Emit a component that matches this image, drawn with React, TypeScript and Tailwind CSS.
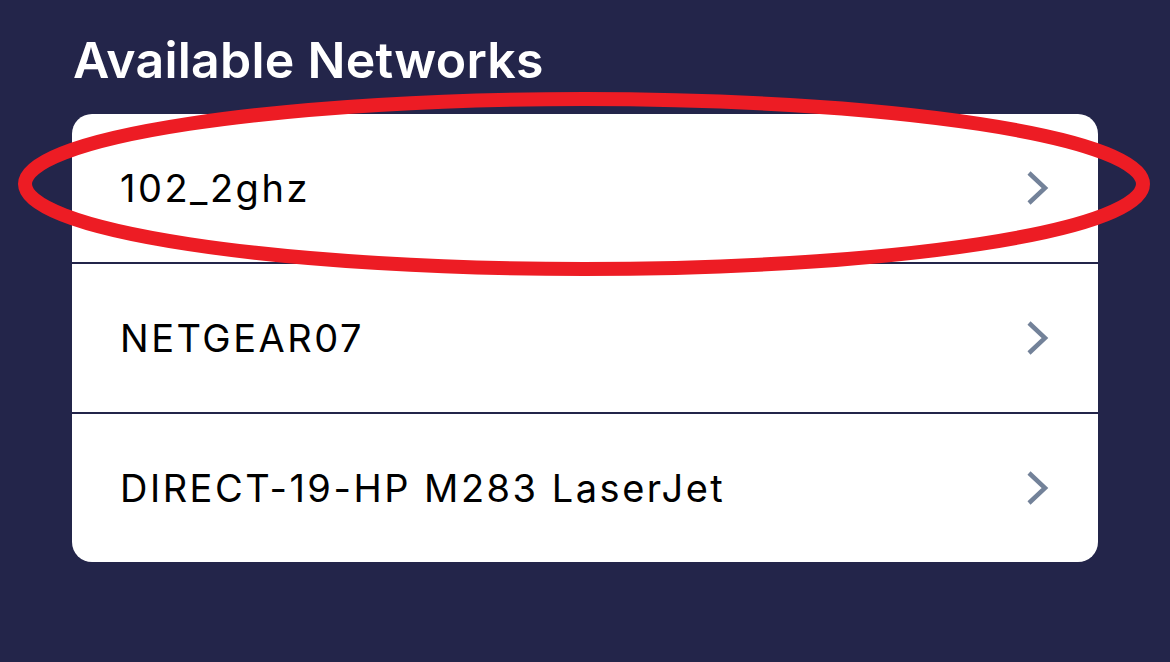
const networks = ['102_2ghz', 'NETGEAR07', 'DIRECT-19-HP M283 LaserJet'];

function Chevron() {
  return (
    <svg width="24" height="36" viewBox="0 0 24 36" fill="none" className="shrink-0">
      <polyline
        points="4,3 20,18 4,33"
        stroke="#738299"
        strokeWidth="4.5"
        strokeLinejoin="miter"
        strokeLinecap="butt"
      />
    </svg>
  );
}

export default function App() {
  return (
    <div
      className="relative h-[662px] w-[1170px] overflow-hidden bg-[#23254a]"
      style={{ fontFamily: 'Inter, "Noto Sans", sans-serif' }}
    >
      <div className="px-[72px] pt-[35px]">
        <h1 className="pl-[1px] text-[50px] font-semibold leading-none tracking-[0.25px] text-white">
          Available Networks
        </h1>

        {/* Network list */}
        <div className="mt-[29px] flex flex-col gap-[2px] overflow-hidden rounded-[20px] bg-[#23254a]">
          {networks.map((name) => (
            <div
              key={name}
              className="flex h-[148px] items-center justify-between bg-white pl-[48px] pr-[49px]"
            >
              <span className="text-[38px] font-normal tracking-[2.5px] text-black">{name}</span>
              <Chevron />
            </div>
          ))}
        </div>
      </div>

      {/* Red annotation ring */}
      <svg
        className="pointer-events-none absolute left-0 top-0"
        width="1170"
        height="662"
        viewBox="0 0 1170 662"
      >
        <ellipse cx="584" cy="184" rx="559" ry="85" fill="none" stroke="#ed1c24" strokeWidth="14" />
      </svg>
    </div>
  );
}
